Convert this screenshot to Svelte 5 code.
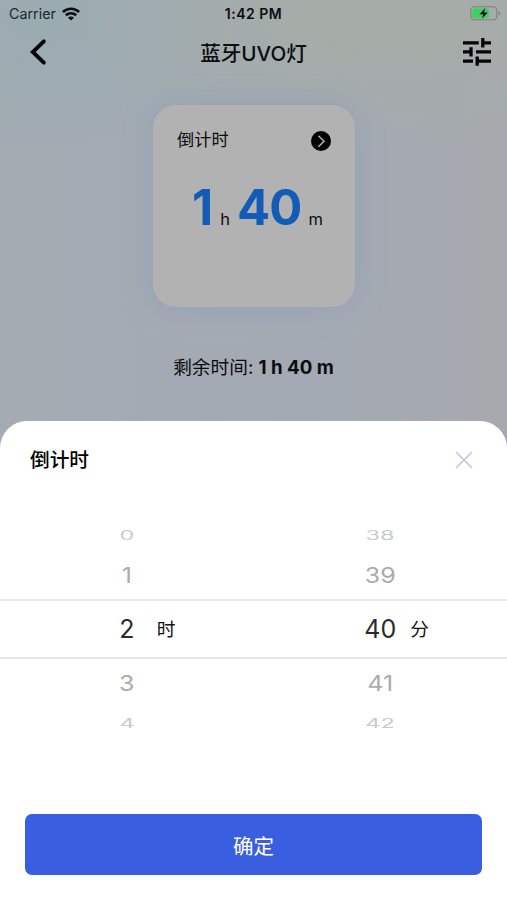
<script lang="ts">
  type Row = { value: number; level: string };

  let hour = $state(2);
  let minute = $state(40);

  const levels = ['far', 'near', 'selected', 'near', 'far'];

  function rows(center: number): Row[] {
    return levels.map((level, i) => ({ value: center + i - 2, level }));
  }

  let columns = $derived([
    { unit: '时', rows: rows(hour) },
    { unit: '分', rows: rows(minute) }
  ]);
</script>

<div class="screen">
  <div class="status">
    <div class="carrier">
      <span>Carrier</span>
      <svg width="18" height="14" viewBox="0 0 18 14">
        <g fill="none" stroke="#0b0d0f" stroke-width="2.6">
          <path d="M0.9 5C5.5 0.7 12.5 0.7 17.1 5" />
          <path d="M3.8 8.3C6.8 5.5 11.2 5.5 14.2 8.3" />
        </g>
        <path d="M9 13.6L6 10.7C7.7 9.2 10.3 9.2 12 10.7Z" fill="#0b0d0f" />
      </svg>
    </div>
    <span class="clock">1:42 PM</span>
    <svg class="battery" width="31" height="15" viewBox="0 0 31 15">
      <rect x="0.8" y="0.8" width="26" height="13" rx="3.6" fill="none" stroke="#7d8280" stroke-width="1.1" />
      <rect x="2.4" y="2.4" width="16.5" height="9.8" rx="2" fill="#3bd35c" />
      <path d="M28.5 5.2C30.6 6 30.6 8.8 28.5 9.6Z" fill="#7d8280" />
      <path d="M15.6 1.6L9.2 8.4H13L11.6 13.2L18.2 6.2H14.4Z" fill="#0b0d0f" stroke="#a9b0aa" stroke-width="0.4" />
    </svg>
  </div>

  <header>
    <button class="icon" aria-label="back">
      <svg width="18" height="28" viewBox="0 0 18 28">
        <path d="M14.8 3.4L3.8 14L14.8 24.6" fill="none" stroke="#050607" stroke-width="3.9" stroke-linecap="round" stroke-linejoin="miter" />
      </svg>
    </button>
    <h1>蓝牙UVO灯</h1>
    <button class="icon" aria-label="settings">
      <svg width="30" height="30" viewBox="0 0 30 30">
        <g fill="none" stroke="#050607" stroke-width="3.3">
          <path d="M1 5.8H16.8M21 5.8H29M20.8 1V10.4" />
          <path d="M1 14.9H9.4M14 14.9H29M9 10.2V19.6" />
          <path d="M1 24.2H11M15 24.2H29M15.2 19.4V28.8" />
        </g>
      </svg>
    </button>
  </header>

  <div class="card">
    <div class="card-head">
      <span>倒计时</span>
      <svg width="20" height="20" viewBox="0 0 20 20">
        <circle cx="10" cy="10" r="10" fill="#000" />
        <path d="M7.4 4.7L13 10.2L7.4 15.7" fill="none" stroke="#b2b2b2" stroke-width="1.5" />
      </svg>
    </div>
    <div class="time">
      <b>1</b><span class="h">h</span><b class="minutes">40</b><span class="m">m</span>
    </div>
  </div>

  <p class="remain">剩余时间: <b>1 h 40 m</b></p>

  <section class="sheet">
    <div class="sheet-head">
      <h2>倒计时</h2>
      <button class="icon" aria-label="close">
        <svg width="18" height="18" viewBox="0 0 18 18">
          <path d="M1.2 1.2L16.8 16.8M16.8 1.2L1.2 16.8" fill="none" stroke="#c6cfe6" stroke-width="1.9" />
        </svg>
      </button>
    </div>

    <div class="picker">
      {#each columns as col}
        <div class="column">
          {#each col.rows as row}
            <div class="row {row.level}">
              <span class="value">{row.value}</span>
              {#if row.level === 'selected'}
                <span class="unit">{col.unit}</span>
              {/if}
            </div>
          {/each}
        </div>
      {/each}
    </div>

    <button class="confirm">确定</button>
  </section>
</div>

<style>
  :global(body) {
    margin: 0;
  }

  .screen {
    display: flex;
    flex-direction: column;
    width: 507px;
    height: 900px;
    overflow: hidden;
    color: #0b0d0f;
    font-family: Inter, 'Noto Sans CJK SC', sans-serif;
    background:
      radial-gradient(ellipse 300px 130px at 370px 20px, #a6ada5, rgba(166, 173, 165, 0)),
      radial-gradient(ellipse 260px 130px at 50px 20px, #9aacb1, rgba(154, 172, 177, 0)),
      linear-gradient(90deg, #a3abb3, #a4aab4 60%, #a6aaae);
  }

  .status {
    display: grid;
    grid-template-columns: 1fr auto 1fr;
    align-items: center;
    height: 27px;
    padding: 0 6px 0 9px;
    font-size: 14.3px;
  }

  .carrier {
    display: flex;
    align-items: center;
    gap: 6px;
    color: #22282b;
  }

  .clock {
    margin-right: 3px;
    font-weight: 600;
    font-size: 14px;
    letter-spacing: 0.5px;
  }

  .battery {
    justify-self: end;
  }

  header {
    display: flex;
    justify-content: space-between;
    align-items: center;
    height: 50px;
    padding: 0 15px 0 29px;
  }

  .icon {
    display: flex;
    padding: 0;
    border: none;
    background: none;
    cursor: pointer;
  }

  h1 {
    margin: 3px 2px 0 0;
    font-size: 20.6px;
    font-weight: 500;
    line-height: 30px;
  }

  .card {
    box-sizing: border-box;
    width: 202px;
    height: 202px;
    margin: 28px 0 0 153px;
    padding: 24px 24px 0;
    border-radius: 23px;
    background: #b2b2b2;
    box-shadow: 0 0 26px rgba(134, 158, 186, 0.6);
  }

  .card-head {
    display: flex;
    justify-content: space-between;
    align-items: center;
    height: 24px;
    font-size: 17.2px;
  }

  .card-head span {
    margin-top: -6px;
  }

  .time {
    display: flex;
    align-items: baseline;
    margin: 25px 0 0 15px;
    font-size: 16.5px;
  }

  .time b {
    color: #125cb8;
    font-size: 49px;
    line-height: 60px;
  }

  .time .minutes {
    letter-spacing: -0.8px;
  }

  .h {
    margin: 0 7px 0 7px;
  }

  .m {
    margin-left: 7px;
  }

  .remain {
    margin: 48px 0 0;
    font-size: 18.7px;
    line-height: 26px;
    text-align: center;
  }

  .sheet {
    display: flex;
    flex-direction: column;
    box-sizing: border-box;
    height: 479px;
    margin-top: auto;
    border-radius: 27px 27px 0 0;
    background: #fff;
  }

  .sheet-head {
    display: flex;
    justify-content: space-between;
    align-items: center;
    height: 78px;
    padding: 0 34px 0 30px;
  }

  h2 {
    margin: 0 0 4px;
    font-size: 19.7px;
    font-weight: 500;
    color: #000;
  }

  .picker {
    display: grid;
    grid-template-columns: 1fr 1fr;
    margin-top: 20px;
  }

  .row {
    display: grid;
    grid-template-columns: 1fr 60px 1fr;
    align-items: center;
    box-sizing: border-box;
    height: 48px;
    color: #ababab;
    font-size: 25px;
  }

  .value {
    grid-column: 2;
    text-align: center;
  }

  .near .value {
    transform: scaleY(0.86);
  }

  .far {
    height: 32px;
    color: #cbcbcb;
  }

  .far .value {
    transform: scale(0.94, 0.5);
  }

  .selected {
    height: 60px;
    border-top: 2px solid #e9e9e9;
    border-bottom: 2px solid #e6e6e6;
    color: #2b2b2b;
  }

  .unit {
    margin-bottom: 3px;
    color: #111;
    font-size: 18.7px;
  }

  .confirm {
    height: 61px;
    margin: auto 25px 25px;
    padding: 0;
    border: none;
    border-radius: 7px;
    background: #3a5ee0;
    color: #fff;
    font-family: inherit;
    font-size: 20.5px;
    cursor: pointer;
  }
</style>
